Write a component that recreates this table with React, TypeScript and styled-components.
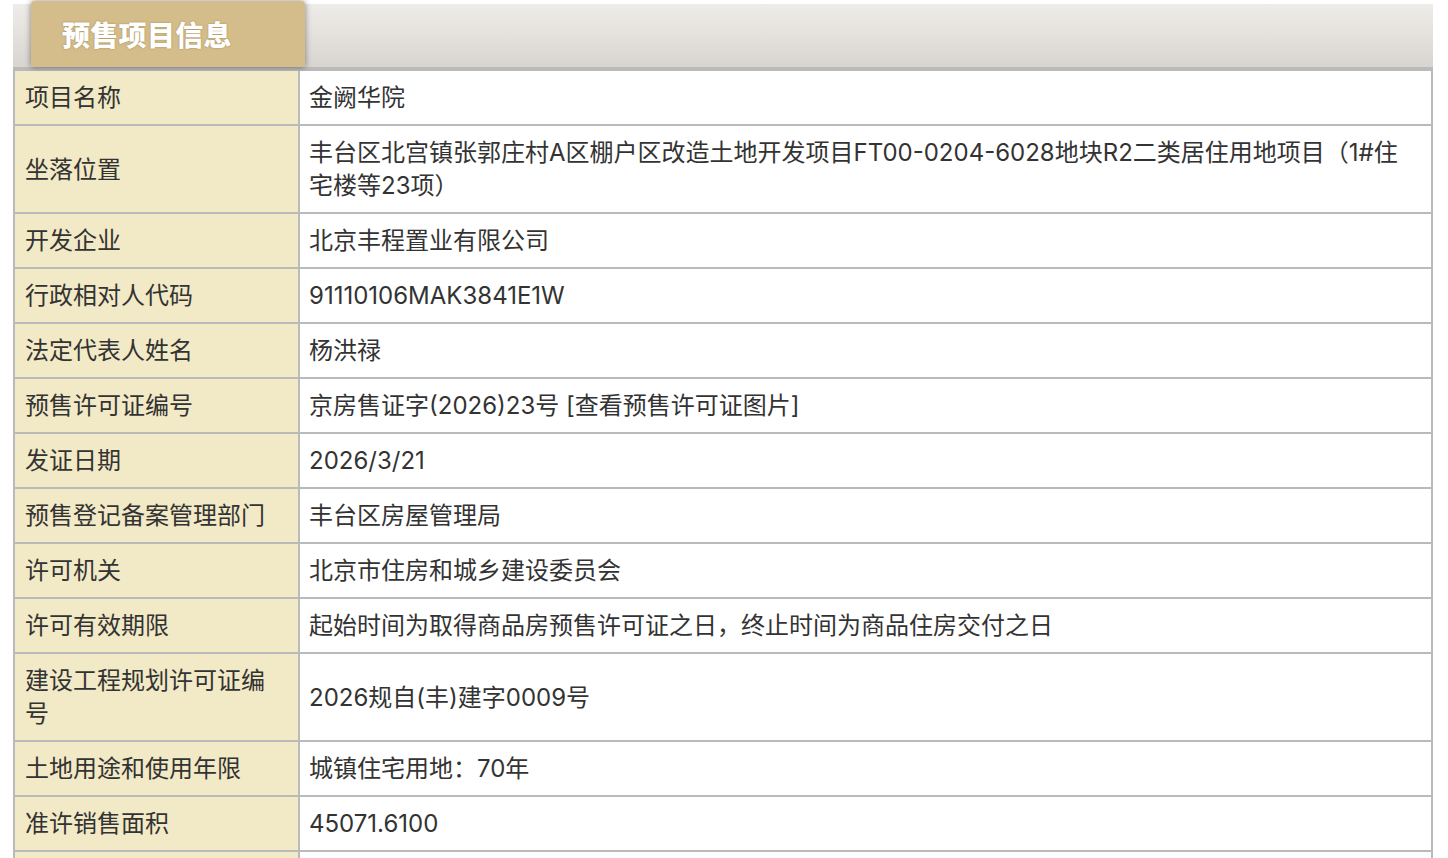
import React from "react";
import styled, { createGlobalStyle } from "styled-components";

const GlobalStyle = createGlobalStyle`
  html, body {
    margin: 0;
    padding: 0;
    background: #ffffff;
  }
  body {
    font-family: Inter, "Noto Sans CJK SC", sans-serif;
    color: #333333;
  }
`;

const Page = styled.div`
  padding: 0 15px 0 13px;
`;

const Panel = styled.section`
  width: 1420px;
`;

const HeaderBar = styled.div`
  margin-top: 4px;
  height: 63px;
  display: flex;
  align-items: flex-start;
  padding-left: 18px;
  background: linear-gradient(to bottom, #eeece8 0%, #e4e1dd 50%, #d8d4cf 100%);
  border-bottom: 2px solid #bababa;
`;

const Tab = styled.div`
  margin-top: -3px;
  width: 274px;
  height: 66px;
  box-sizing: border-box;
  padding-left: 31px;
  display: flex;
  align-items: center;
  background: #d4bd8a;
  border-radius: 4px 4px 0 0;
  box-shadow: 0 0 6px rgba(0, 0, 0, 0.45);
  color: #ffffff;
  font-family: "Noto Sans CJK SC", sans-serif;
  font-weight: 900;
  font-size: 28px;
  letter-spacing: 0.3px;
  text-shadow: 0 0 2px rgba(90, 70, 30, 0.45);
`;

const Table = styled.div`
  border: 2px solid #bababa;
  border-bottom: none;
`;

const Row = styled.div`
  display: grid;
  grid-template-columns: 285px 1fr;
  border-bottom: 2px solid #bababa;
`;

const Label = styled.div`
  background: #f2e9c6;
  border-right: 2px solid #bababa;
  padding: 10px;
  min-height: 33px;
  display: flex;
  align-items: center;
  font-size: 24px;
  line-height: 33px;
  color: #333333;
`;

const Value = styled.div`
  background: #ffffff;
  padding: 10px 22px 10px 9px;
  min-height: 33px;
  display: flex;
  align-items: center;
  font-size: 24px;
  line-height: 33px;
  color: #333333;
`;

const rows: [string, string][] = [
  ["项目名称", "金阙华院"],
  [
    "坐落位置",
    "丰台区北宫镇张郭庄村A区棚户区改造土地开发项目FT00-0204-6028地块R2二类居住用地项目（1#住宅楼等23项）",
  ],
  ["开发企业", "北京丰程置业有限公司"],
  ["行政相对人代码", "91110106MAK3841E1W"],
  ["法定代表人姓名", "杨洪禄"],
  ["预售许可证编号", "京房售证字(2026)23号 [查看预售许可证图片]"],
  ["发证日期", "2026/3/21"],
  ["预售登记备案管理部门", "丰台区房屋管理局"],
  ["许可机关", "北京市住房和城乡建设委员会"],
  ["许可有效期限", "起始时间为取得商品房预售许可证之日，终止时间为商品住房交付之日"],
  ["建设工程规划许可证编号", "2026规自(丰)建字0009号"],
  ["土地用途和使用年限", "城镇住宅用地：70年"],
  ["准许销售面积", "45071.6100"],
  ["", ""],
];

export default function App() {
  return (
    <>
      <GlobalStyle />
      <Page>
        <Panel>
          <HeaderBar>
            <Tab>预售项目信息</Tab>
          </HeaderBar>
          <Table>
            {rows.map(([k, v], i) => (
              <Row key={i}>
                <Label>{k}</Label>
                <Value>{v}</Value>
              </Row>
            ))}
          </Table>
        </Panel>
      </Page>
    </>
  );
}
